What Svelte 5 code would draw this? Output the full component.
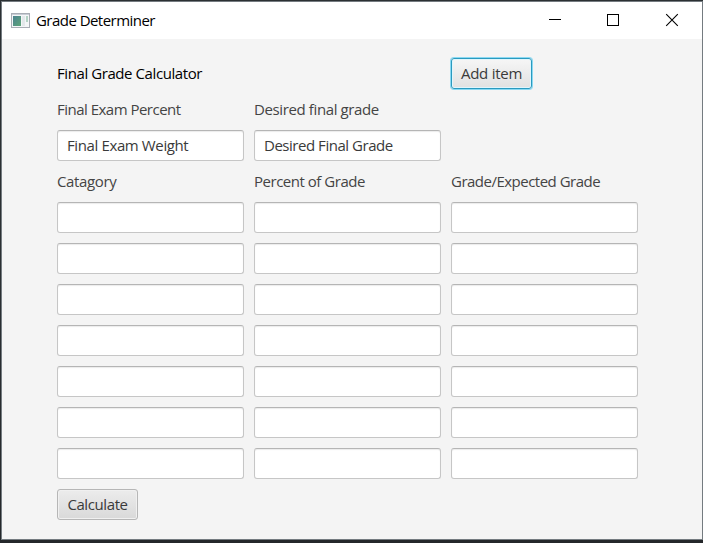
<script>
  let examWeight = $state('Final Exam Weight');
  let desiredGrade = $state('Desired Final Grade');
  let items = $state(Array.from({ length: 7 }, () => ({ category: '', percent: '', grade: '' })));

  function addItem() {
    items.push({ category: '', percent: '', grade: '' });
  }
</script>

<div class="desktop">
  <div class="window">
    <header>
      <svg class="app-icon" width="19" height="16" viewBox="0 0 19 16">
        <defs>
          <linearGradient id="pane" x1="0" y1="0" x2="1" y2="1">
            <stop offset="0" stop-color="#4c8290" />
            <stop offset="1" stop-color="#5da578" />
          </linearGradient>
        </defs>
        <rect x="0.5" y="0.5" width="18" height="14" fill="#f4f6f7" stroke="#a9adb5" />
        <path d="M1 1.5H18" stroke="#c9ced6" />
        <rect x="2" y="3" width="8" height="10" fill="url(#pane)" />
        <rect x="11" y="3" width="3" height="10" fill="#e3e8ea" />
        <rect x="15" y="3" width="2" height="6" fill="#b4d3c5" />
      </svg>
      <span class="title">Grade Determiner</span>
      <div class="controls">
        <svg width="14" height="14" viewBox="0 0 14 14"><path d="M1 6.5H13" stroke="#000" /></svg>
        <svg width="14" height="14" viewBox="0 0 14 14"><rect x="1.5" y="1.5" width="11" height="11" fill="none" stroke="#000" /></svg>
        <svg class="close" width="14" height="14" viewBox="0 0 14 14"><path d="M1.2 1.2L12.8 12.8M12.8 1.2L1.2 12.8" stroke="#000" stroke-width="1.1" /></svg>
      </div>
    </header>

    <main>
      <span class="heading">Final Grade Calculator</span>
      <button class="add" onclick={addItem}>Add item</button>

      <span class="exam-label">Final Exam Percent</span>
      <span class="desired-label">Desired final grade</span>
      <span></span>

      <input class="exam" bind:value={examWeight} />
      <input class="desired" bind:value={desiredGrade} />
      <span></span>

      <span class="category-label">Catagory</span>
      <span class="percent-label">Percent of Grade</span>
      <span class="grade-label">Grade/Expected Grade</span>

      {#each items as item}
        <input bind:value={item.category} />
        <input bind:value={item.percent} />
        <input bind:value={item.grade} />
      {/each}

      <button class="calculate">Calculate</button>
    </main>
  </div>
</div>

<style>
  :global(body) {
    margin: 0;
    overflow: hidden;
  }
  .desktop {
    box-sizing: border-box;
    width: 703px;
    height: 543px;
    padding: 1px 0 3px 1px;
    background: linear-gradient(#2b3033, #2b3033 50%, #24272a);
    font-family: 'Open Sans', 'Noto Sans', sans-serif;
    font-size: 15px;
    letter-spacing: -0.42px;
    color: #444;
  }
  .window {
    box-sizing: border-box;
    height: 539px;
    border: 1px solid #747b80;
    background: #f4f4f4;
  }
  header {
    display: flex;
    align-items: center;
    height: 37px;
    background: #fff;
    color: #000;
  }
  .app-icon {
    margin: 0 6px 0 9px;
  }
  .title {
    flex: 1;
    letter-spacing: -0.54px;
  }
  .controls {
    display: flex;
    gap: 44px;
    margin: 0 23px 1px 0;
  }
  .close {
    margin-left: 1px;
  }
  main {
    display: grid;
    grid-template-columns: repeat(3, 187px);
    grid-template-rows: 31px 21px 31px 21px;
    grid-auto-rows: 31px;
    gap: 10px;
    padding: 19px 0 0 55px;
    align-items: center;
  }
  span {
    white-space: nowrap;
    line-height: 21px;
  }
  .heading {
    grid-column: span 2;
    color: #000;
  }
  .exam-label {
    letter-spacing: -0.51px;
  }
  .desired-label {
    letter-spacing: -0.38px;
  }
  .category-label {
    letter-spacing: -0.35px;
  }
  .percent-label {
    letter-spacing: -0.48px;
  }
  .grade-label {
    letter-spacing: -0.51px;
  }
  input,
  button {
    box-sizing: border-box;
    height: 31px;
    margin: 0;
    font: inherit;
    letter-spacing: inherit;
    color: #3a3a3a;
    outline: none;
  }
  input {
    width: 187px;
    padding: 0 9px 2px;
    border: 1px solid #c6c6c6;
    border-top-color: #b5b5b5;
    border-radius: 3px;
    background: #fff;
    box-shadow: inset 0 1px 1px #ececec;
  }
  .exam {
    letter-spacing: -0.38px;
  }
  .desired {
    letter-spacing: -0.47px;
  }
  button {
    width: 81px;
    padding: 0 0 2px;
    border: 1px solid #b6b6b6;
    border-radius: 3px;
    background: linear-gradient(#ececec, #d9d9d9);
    box-shadow: inset 0 0 0 1px #f0f0f0;
    white-space: nowrap;
  }
  .add {
    border-color: #2a9abf;
    background: linear-gradient(#f6f6f6, #e1e1e1);
    box-shadow: 0 0 0 1px #8bd9f2, inset 0 0 0 1px #e0f5fc;
    letter-spacing: -0.25px;
  }
  .calculate {
    letter-spacing: -0.4px;
  }
</style>
